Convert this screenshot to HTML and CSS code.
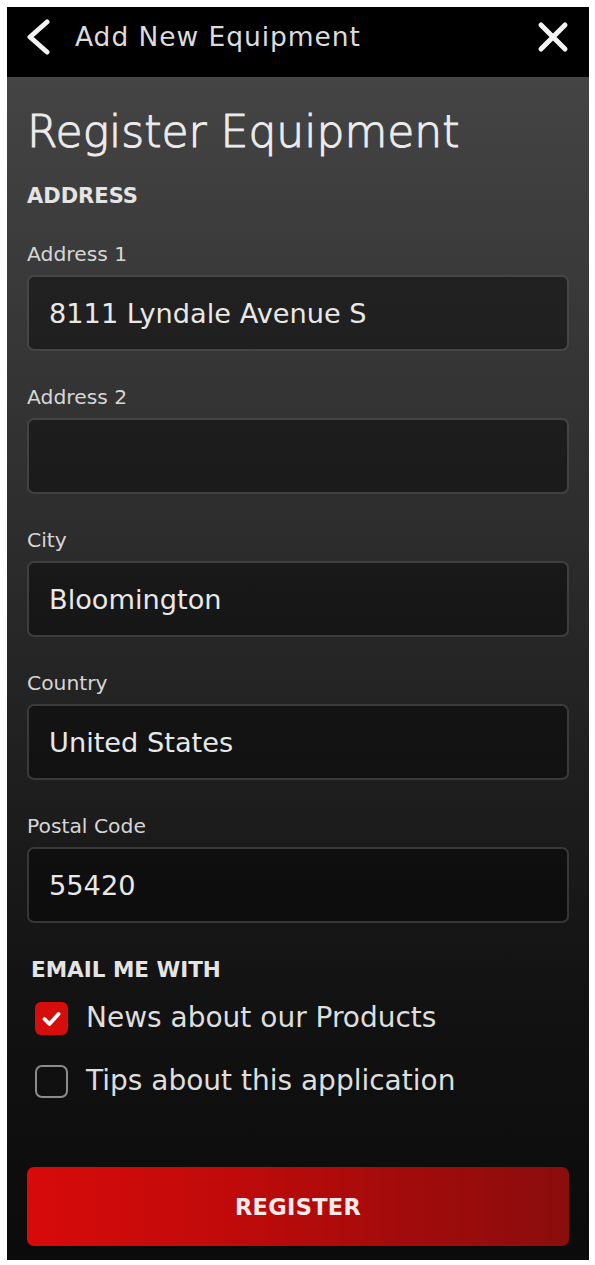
FILE: index.html
```html
<!DOCTYPE html>
<html lang="en">
<head>
<meta charset="utf-8">
<title>Register Equipment</title>
<link rel="stylesheet" href="styles.css">
</head>
<body>
<div class="phone">
  <header class="topbar">
    <svg class="back" width="26" height="36" viewBox="0 0 26 36" aria-hidden="true">
      <path d="M21 3 L4 18 L21 33" fill="none" stroke="#f2f2f2" stroke-width="5" stroke-linecap="round" stroke-linejoin="round"/>
    </svg>
    <span class="topbar-title">Add New Equipment</span>
    <svg class="close" width="32" height="32" viewBox="0 0 32 32" aria-hidden="true">
      <path d="M4 4 L28 28 M28 4 L4 28" fill="none" stroke="#f4f4f4" stroke-width="5" stroke-linecap="round"/>
    </svg>
  </header>
  <main class="content">
    <h1 class="page-title">Register Equipment</h1>
    <h2 class="section-title">ADDRESS</h2>

    <div class="field">
      <label class="field-label">Address 1</label>
      <input class="field-input" type="text" value="8111 Lyndale Avenue S" readonly>
    </div>
    <div class="field">
      <label class="field-label">Address 2</label>
      <input class="field-input" type="text" value="" readonly>
    </div>
    <div class="field">
      <label class="field-label">City</label>
      <input class="field-input" type="text" value="Bloomington" readonly>
    </div>
    <div class="field">
      <label class="field-label">Country</label>
      <input class="field-input" type="text" value="United States" readonly>
    </div>
    <div class="field">
      <label class="field-label">Postal Code</label>
      <input class="field-input" type="text" value="55420" readonly>
    </div>

    <h2 class="section-title email-title">EMAIL ME WITH</h2>
    <div class="checks">
      <div class="check-row">
        <span class="box box-on">
          <svg width="33" height="33" viewBox="0 0 33 33" aria-hidden="true">
            <path d="M9.5 17 L14.5 22 L23.5 12" fill="none" stroke="#fff" stroke-width="3.8" stroke-linecap="round" stroke-linejoin="round"/>
          </svg>
        </span>
        <span class="check-text">News about our Products</span>
      </div>
      <div class="check-row">
        <span class="box box-off"></span>
        <span class="check-text">Tips about this application</span>
      </div>
    </div>

    <button class="register" type="button">REGISTER</button>
  </main>
</div>
</body>
</html>
```

FILE: styles.css
```css
* {
  box-sizing: border-box;
}

html, body {
  margin: 0;
  padding: 0;
  background: #ffffff;
}

body {
  font-family: "DejaVu Sans", Verdana, sans-serif;
}

.phone {
  margin: 7px 0 0 7px;
  width: 582px;
  height: 1253px;
  display: flex;
  flex-direction: column;
  background: #0a0a0a;
}

.topbar {
  height: 70px;
  flex: none;
  background: #000;
  display: flex;
  align-items: center;
  padding: 0 20px 10px 19px;
}

.back {
  display: block;
}

.topbar-title {
  margin-left: 23px;
  font-size: 26.5px;
  letter-spacing: 0.95px;
  color: #dcdcdc;
  line-height: 32px;
}

.close {
  display: block;
  margin-left: auto;
}

.content {
  flex: 1;
  padding: 0 20px 13px 20px;
  display: flex;
  flex-direction: column;
  background: linear-gradient(180deg, #444444 0%, #393939 18%, #2d2d2d 38%, #1e1e1e 60%, #121212 78%, #0b0b0b 100%);
}

.page-title {
  margin: 29px 0 0 0;
  font-size: 44px;
  line-height: 52px;
  font-weight: 300;
  color: #ececec;
  -webkit-text-stroke: 1px #ececec;
}

.section-title {
  margin: 26px 0 0 0;
  font-size: 21px;
  line-height: 24px;
  font-weight: bold;
  color: #e4e4e4;
}

.field {
  margin-top: 34px;
  display: flex;
  flex-direction: column;
}

.field-label {
  font-size: 20.3px;
  line-height: 24px;
  color: #d6d6d6;
  margin-bottom: 9px;
}

.field-input {
  height: 76px;
  width: 100%;
  border: 2px solid rgba(255, 255, 255, 0.17);
  border-radius: 7px;
  background: rgba(0, 0, 0, 0.42);
  padding: 0 18px 0 20px;
  font-family: "DejaVu Sans", Verdana, sans-serif;
  font-size: 27.2px;
  color: #e8e8e8;
  outline: none;
}

.email-title {
  margin-top: 35px;
  margin-left: 4px;
  font-size: 21.5px;
}

.checks {
  margin-top: 16px;
  display: flex;
  flex-direction: column;
  gap: 23px;
}

.check-row {
  height: 40px;
  display: flex;
  align-items: center;
  padding-left: 8px;
}

.box {
  width: 33px;
  height: 33px;
  flex: none;
  border-radius: 6px;
  display: block;
}

.box svg {
  display: block;
}

.box-on {
  background: #d60d0d;
}

.box-off {
  border: 2.5px solid #8c8c8c;
  border-radius: 7px;
}

.check-text {
  margin-left: 18px;
  font-size: 28px;
  line-height: 34px;
  color: #dedede;
}

.register {
  margin-top: 66px;
  height: 79px;
  width: 100%;
  border: none;
  border-radius: 7px;
  background: linear-gradient(90deg, #d80a0a 0%, #c20a0a 35%, #a20b0b 70%, #8a0d0d 100%);
  color: #f6e9e9;
  font-family: "DejaVu Sans", Verdana, sans-serif;
  font-size: 22.5px;
  font-weight: bold;
  letter-spacing: 0.3px;
  cursor: pointer;
}
```
